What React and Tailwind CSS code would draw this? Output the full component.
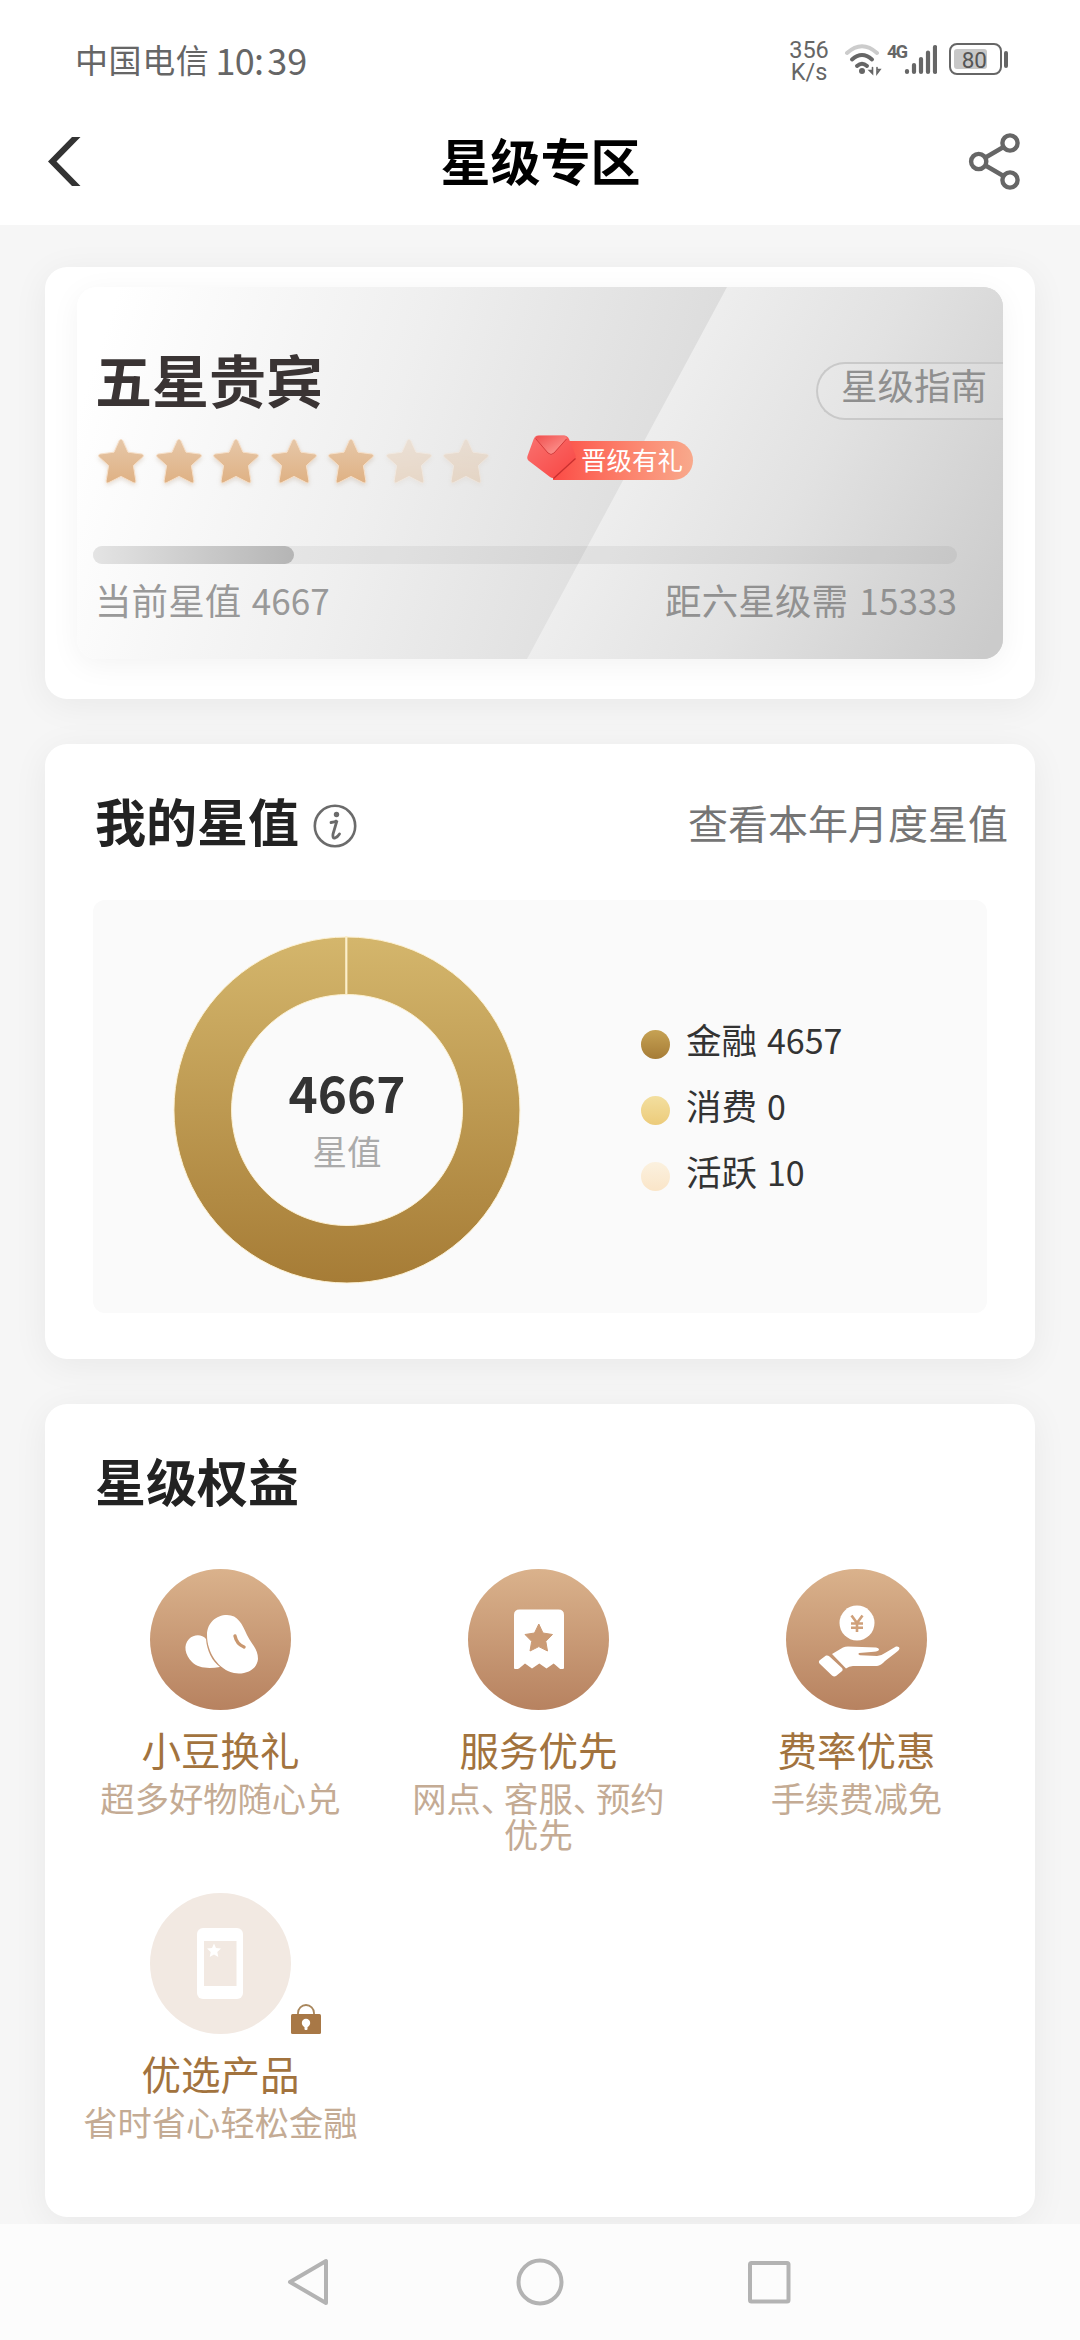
import React from "react";

const STAR =
  "M23 2.5 C24 2.5 24.6 3.2 25 4 L30 15.2 L43.6 17 C45.6 17.3 46 18.8 44.6 20.2 L35.4 28.6 L37.8 43.6 C38 45.6 37 46.4 35.2 45.6 L23 39.4 L10.8 45.6 C9 46.4 8 45.6 8.2 43.6 L10.6 28.6 L1.4 20.2 C0 18.8 0.4 17.3 2.4 17 L16 15.2 L21 4 C21.4 3.2 22 2.5 23 2.5 Z";

function StatusBar() {
  return (
    <div className="flex h-[100px] items-start pl-[75px] pr-[72px] text-[#666666]">
      <div className="mt-[41px] flex items-center whitespace-nowrap leading-[36px]">
        <span className="text-[33px] tracking-[0.6px]">中国电信</span>
        <span className="ml-[6px] text-[36px] tracking-[-0.7px]">10:</span>
        <span className="ml-[4px] text-[36px]">39</span>
      </div>
      <div className="ml-auto mt-[38px] flex items-start">
        <div className="mr-[5px] mt-px w-[42px] text-center font-[Roboto,sans-serif] text-[23.500px] leading-[22px]">
          <div>356</div>
          <div>K/s</div>
        </div>
        <svg className="ml-[9px] mt-[5px] h-[33px] w-[40px]" viewBox="0 0 40 33" fill="none" strokeLinecap="round">
          <path d="M3 10 Q18 -3.500 33 10" stroke="#cccccc" strokeWidth="4" />
          <path d="M8 16.500 Q18 7.500 28 16.500" stroke="#666666" strokeWidth="4" />
          <path d="M13 23 Q18 18.500 23 23" stroke="#666666" strokeWidth="4" />
          <circle cx="18" cy="28" r="3" fill="#666666" />
          <path d="M28.500 24.500 V30.500 L25.500 27.500 H28.500 M33 24.500 V30.500 L36 26.500 H33" stroke="#666666" strokeWidth="1.600" />
        </svg>
        <span className="ml-[3px] mt-[3px] w-[19px] font-[Roboto,sans-serif] text-[18px] font-bold leading-[22px] tracking-[-1.5px]">
          4G
        </span>
        <svg className="-ml-[3px] mt-[5px] h-[33px] w-[34px]" viewBox="0 0 34 33" stroke="#666666" strokeWidth="4.200" strokeLinecap="round">
          <path d="M4 28 V29 M11 22 V29 M18 16 V29 M25 9.500 V29 M32 4 V29" />
        </svg>
        <div className="ml-[12px] mt-[5px] flex items-center">
          <div className="flex h-[32px] w-[53px] items-center rounded-[8px] border-[2.500px] border-[#666666] pl-[3px]">
            <div className="flex h-[20px] w-[33px] items-center justify-end whitespace-nowrap rounded-[3px] bg-[#c8c8c8] pt-[2px] font-[Roboto,sans-serif] text-[22.500px] leading-[20px] text-[#555555]">
              80
            </div>
          </div>
          <div className="ml-[2px] h-[17px] w-[4px] rounded-full bg-[#666666]" />
        </div>
      </div>
    </div>
  );
}

function Header() {
  return (
    <div className="grid h-[125px] grid-cols-3 items-start bg-white pl-[46px] pr-[57px] pt-[33px]">
      <svg className="mt-[2px] h-[54px] w-[36px]" viewBox="0 0 36 54">
        <path d="M26 2 H34.500 L10.500 26.500 L34.500 51 H26 L2 26.500 Z" fill="#333333" />
      </svg>
      <h1 className="-mr-[12px] -mt-[2px] whitespace-nowrap text-center text-[50px] font-bold leading-[56px] text-black">星级专区</h1>
      <svg className="ml-auto h-[60px] w-[56px]" viewBox="0 0 56 60" fill="none" stroke="#666666" strokeWidth="4.400">
        <circle cx="43" cy="10" r="7.600" />
        <circle cx="11.700" cy="28.500" r="7.600" />
        <circle cx="43" cy="47" r="7.600" />
        <path d="M18.500 24.500 L36.500 14 M18.500 32.500 L36.500 43" />
      </svg>
    </div>
  );
}

function Star({ on }) {
  return (
    <svg className={on ? "h-[49px] w-[46px] overflow-visible" : "h-[49px] w-[46px] overflow-visible opacity-35"} viewBox="0 0 46 49">
      <defs>
        <linearGradient id="starFill" x1="0" y1="0" x2="0" y2="1">
          <stop offset="0" stopColor="#e6c7a8" />
          <stop offset="1" stopColor="#dfb184" />
        </linearGradient>
      </defs>
      <path d={STAR} fill="url(#starFill)" stroke="#f6dfc8" strokeWidth="1" className="drop-shadow-[0_2px_2px_rgba(150,110,70,0.2)]" />
    </svg>
  );
}

function GiftBadge() {
  return (
    <div className="ml-[37px] flex h-[46px] items-start">
      <svg className="z-10 h-[46px] w-[52px]" viewBox="0 0 52 46">
        <defs>
          <linearGradient id="envelope" x1="0" y1="0" x2="1" y2="1">
            <stop offset="0" stopColor="#f97270" />
            <stop offset="1" stopColor="#f94542" />
          </linearGradient>
          <linearGradient id="flap" x1="0" y1="0" x2="1" y2="1">
            <stop offset="0" stopColor="#f04f4e" />
            <stop offset="1" stopColor="#ffa09a" />
          </linearGradient>
        </defs>
        <path d="M12 0.500 H38 Q41.500 0.500 43 4 L49.500 20 Q50.500 23 48 25 L29.500 42 Q27 44 24 42 L3 26 Q0.500 24 1.500 21 L7.500 4.500 Q9 0.500 12 0.500 Z" fill="url(#envelope)" />
        <path d="M49.500 23.500 L27.500 43.500" stroke="#c8302f" strokeWidth="1.300" fill="none" />
        <path d="M9.500 3 Q10 0.800 13 0.800 H38 Q41 1 40.500 3.500 L28 18 Q25 21 22 18 Z" fill="url(#flap)" />
        <path d="M9.500 3.500 L22 18 Q25 21 28 18 L40.500 4" fill="none" stroke="#d43c3c" strokeWidth="1" />
      </svg>
      <div className="-ml-[25px] mt-[6px] flex h-[39px] w-[140px] items-center whitespace-nowrap rounded-r-full bg-gradient-to-r from-[#fb4a46] to-[#f8a98c] pb-[3px] pl-[28px] text-[25.500px] leading-[36px] text-white">
        晋级有礼
      </div>
    </div>
  );
}

function LevelCard() {
  return (
    <section className="mx-[45px] h-[432px] rounded-[22px] bg-white pl-[32px] pr-[32px] pt-[20px] shadow-[0_6px_36px_rgba(0,0,0,0.06)]">
      <div className="relative h-[372px] overflow-hidden rounded-[20px] bg-[linear-gradient(108deg,#ffffff_4%,#efefef_34%,#d9d9d9_68%)] shadow-[0_6px_30px_rgba(0,0,0,0.05)]">
        <div className="absolute inset-0 bg-[linear-gradient(118deg,#f6f6f6_46%,#e2e2e2_74%,#cbcbcb_98%)] [clip-path:polygon(650px_0,100%_0,100%_100%,450px_100%)]" />
        <div className="relative pl-[16px]">
          <div className="flex items-start justify-between pt-[56px]">
            <h2 className="pl-[2px] text-[57px] font-bold leading-[70px] text-[#3a3434]">五星贵宾</h2>
            <div className="mt-[19px] h-[58px] w-[187px] rounded-l-full border-2 border-r-0 border-[#c9c9c9] bg-white/10 pl-[23px] text-[36.500px] leading-[41px] text-[#8f8f8f]">
              星级指南
            </div>
          </div>
          <div className="mt-[15px] flex items-start pl-[5px]">
            <div className="flex gap-[11.500px] pt-[2px]">
              {[1, 2, 3, 4, 5, 6, 7].map((n) => (
                <Star key={n} on={n <= 5} />
              ))}
            </div>
            <GiftBadge />
          </div>
          <div className="mt-[60px] h-[18px] w-[864px] rounded-full bg-black/[0.05]">
            <div className="h-full w-[201px] rounded-full bg-gradient-to-r from-[#e4e4e4] to-[#b5b5b5]" />
          </div>
          <div className="mt-[14px] flex w-[864px] justify-between pl-[2px] text-[36.500px] leading-[44px] tracking-[0.1px] text-[#999999]">
            <span>
              当前星值 <span className="ml-[2px] text-[35px]">4667</span>
            </span>
            <span className="text-[#919191]">
              距六星级需 <span className="ml-[3px] text-[35px]">15333</span>
            </span>
          </div>
        </div>
      </div>
    </section>
  );
}

function Donut() {
  return (
    <div className="relative mt-[6px] h-[348px] w-[348px]">
      <svg className="h-[348px] w-[348px]" viewBox="0 0 348 348">
        <defs>
          <linearGradient id="gold" x1="0" y1="0" x2="0" y2="1">
            <stop offset="0" stopColor="#d4b66c" />
            <stop offset="1" stopColor="#a67c36" />
          </linearGradient>
        </defs>
        <path
          fillRule="evenodd"
          fill="url(#gold)"
          stroke="#fdf1d2"
          strokeWidth="1"
          d="M174 1 A173 173 0 1 1 173.900 1 Z M174 58.500 A115.500 115.500 0 1 0 174.100 58.500 Z"
        />
        <path d="M173.300 0 V58.500" stroke="#fcefcb" strokeWidth="2.200" />
      </svg>
      <div className="absolute inset-0 flex flex-col items-center pt-[126px]">
        <span className="text-[49.500px] font-bold leading-[60px] text-[#333333]">4667</span>
        <span className="mt-[6px] text-[34.500px] leading-[44px] text-[#aaaaaa]">星值</span>
      </div>
    </div>
  );
}

function Legend() {
  const rows = [
    ["金融", "4657", "from-[#c6a254] to-[#a67c36]"],
    ["消费", "0", "from-[#f3df9f] to-[#eccb7a]"],
    ["活跃", "10", "from-[#fbf1df] to-[#fae5c8]"],
  ];
  return (
    <ul className="ml-[120px] mt-[2px]">
      {rows.map(([name, value, tone]) => (
        <li key={name} className="flex h-[66px] items-center">
          <i className={`mt-[6px] h-[29px] w-[29px] rounded-full bg-gradient-to-b ${tone}`} />
          <span className="-mt-[4px] ml-[16px] text-[35.500px] leading-[44px] text-[#333333]">
            {name} <span className="ml-[2px] text-[34px]">{value}</span>
          </span>
        </li>
      ))}
    </ul>
  );
}

function ValueCard() {
  return (
    <section className="mx-[45px] mt-[45px] h-[615px] rounded-[22px] bg-white pt-[44px] shadow-[0_6px_36px_rgba(0,0,0,0.06)]">
      <div className="flex h-[64px] items-center pl-[50px] pr-[27px]">
        <h2 className="text-[51px] font-bold leading-[64px] text-[#222222]">我的星值</h2>
        <svg className="ml-[14px] mt-[11px] h-[44px] w-[44px]" viewBox="0 0 44 44" fill="none" stroke="#6b6b6b" strokeLinecap="round">
          <circle cx="22" cy="22" r="20.200" strokeWidth="2.600" />
          <circle cx="23.500" cy="10.500" r="2.700" fill="#6b6b6b" stroke="none" />
          <path d="M18 18.500 Q22.500 18 24 16.500 L20 30 Q19.300 34.500 22 34 Q24.500 33.200 26.500 30" strokeWidth="2.800" />
        </svg>
        <span className="ml-auto mt-[3px] whitespace-nowrap text-[40px] leading-[56px] text-[#757575]">查看本年月度星值</span>
      </div>
      <div className="ml-[48px] mt-[48px] flex h-[413px] w-[894px] items-center rounded-[12px] bg-[#fafafa] pl-[80px]">
        <Donut />
        <Legend />
      </div>
    </section>
  );
}

function BeanIcon() {
  return (
    <g fill="#ffffff">
      <path d="M56 70 C52 65 44 65 39 70 C33 76 35 86 42 93 C48 99 58 100 70 98 C62 92 57 82 56 70 Z" />
      <path d="M57 66 C57 54 66 46 77 46 C88 46 92 55 97 66 C101 75 108 79 108 90 C107 101 95 106 84 104 C69 101 57 84 57 66 Z" />
      <path d="M85 67 C86 72 89 76 94 78" fill="none" stroke="#c9976f" strokeWidth="3.400" strokeLinecap="round" />
    </g>
  );
}

function TicketIcon() {
  return (
    <g>
      <path d="M51.500 40.500 H90.500 Q96 40.500 96 46 V99.500 Q93 100.500 91.500 99.500 L85.700 94.500 L78.500 99.500 L71.300 94.500 L64 99.500 L57 94.500 L51 99.500 Q48 100.500 46 99.500 V46 Q46 40.500 51.500 40.500 Z" fill="#ffffff" />
      <path d="M70.800 55 L75 64 L84.500 65.500 L77.800 72.300 L79.500 82 L70.800 77.600 L62 82 L63.700 72.300 L57 65.500 L66.500 64 Z" fill="#cb9b75" stroke="#cb9b75" strokeWidth="1" strokeLinejoin="round" />
    </g>
  );
}

function HandIcon() {
  return (
    <g fill="#ffffff">
      <circle cx="71" cy="54" r="17.500" />
      <path d="M65.500 46.500 L71 54 L76.500 46.500 M71 54 V63 M65 54.500 H77 M65 58.800 H77" fill="none" stroke="#cfa07a" strokeWidth="2.600" />
      <path d="M46 85 L57 78.500 Q59 77.500 62 77.500 L90 78.500 Q93 79 93 80.500 Q92.500 82.500 88 82.700 L73 84 Q71.500 85.500 74 86.300 L91 87 Q95 87 99 84 L110 77.500 Q113 77 113.500 79 Q113.500 81 110 83.500 L99 92 Q95 96.500 91 97 H67 Q63 97 60 99.500 Z" />
      <path d="M40 86.500 Q42 86 43.500 87.500 L56 99 Q57.500 101 55.500 102.500 L50 107 Q48 108 46 106.500 L33.500 94.500 Q32 92.500 34 91 Z" />
    </g>
  );
}

function PhoneIcon() {
  return (
    <g>
      <rect x="47" y="35" width="46" height="71" rx="6" fill="#ffffff" />
      <rect x="54" y="48" width="32.500" height="45" fill="#f2e9e2" />
      <path d="M64 50.500 L66 55 L71 55.500 L67.300 59 L68.300 64 L64 61.500 L59.700 64 L60.700 59 L57 55.500 L62 55 Z" fill="#ffffff" />
    </g>
  );
}

function Benefit({ icon, title, locked, children }) {
  return (
    <div className="flex h-[324px] flex-col items-center">
      <div className="relative">
        <svg className="h-[141px] w-[141px]" viewBox="0 0 141 141">
          <defs>
            <linearGradient id="bronze" x1="0" y1="0" x2="0" y2="1">
              <stop offset="0" stopColor="#dab28c" />
              <stop offset="1" stopColor="#b78260" />
            </linearGradient>
          </defs>
          <circle cx="70.500" cy="70.500" r="70.500" fill={locked ? "#f2e9e2" : "url(#bronze)"} />
          {icon}
        </svg>
        {locked && (
          <svg className="absolute -right-[30px] bottom-0 h-[30px] w-[30px]" viewBox="0 0 30 30">
            <path d="M7 11 V9 A8 8 0 0 1 23 9 V11" fill="none" stroke="#a8865c" strokeWidth="1.800" />
            <rect y="10" width="30" height="20" rx="1.500" fill="#a87846" />
            <circle cx="15" cy="19" r="4.200" fill="#ffffff" />
            <rect x="13.500" y="20" width="3" height="6" rx="1" fill="#ffffff" />
          </svg>
        )}
      </div>
      <h3 className="mt-[13px] whitespace-nowrap text-[39.500px] leading-[52px] text-[#a2733e]">{title}</h3>
      <p className="mt-[4px] whitespace-nowrap text-center text-[34.300px] leading-[36px] text-[#c4ab94]">{children}</p>
    </div>
  );
}

function BenefitsCard() {
  return (
    <section className="mx-[45px] mt-[45px] h-[813px] rounded-[22px] bg-white pt-[44px] shadow-[0_6px_36px_rgba(0,0,0,0.06)]">
      <h2 className="pl-[50px] text-[51px] font-bold leading-[64px] text-[#222222]">星级权益</h2>
      <div className="ml-[16.400px] mt-[57px] grid w-[954px] grid-cols-3">
        <Benefit icon={<BeanIcon />} title="小豆换礼">
          超多好物随心兑
        </Benefit>
        <Benefit icon={<TicketIcon />} title="服务优先">
          网点<span className="tracking-[-11px]">、</span>客服<span className="tracking-[-11px]">、</span>预约
          <br />
          优先
        </Benefit>
        <Benefit icon={<HandIcon />} title="费率优惠">
          手续费减免
        </Benefit>
        <Benefit icon={<PhoneIcon />} title="优选产品" locked>
          省时省心轻松金融
        </Benefit>
      </div>
    </section>
  );
}

function NavBar() {
  return (
    <nav className="flex h-[116px] shrink-0 items-start justify-center gap-[179px] bg-[#fcfcfc] pt-[32px]">
      <svg className="h-[52px] w-[52px]" viewBox="0 0 52 52" fill="none" stroke="#b3b3b3" strokeWidth="4" strokeLinejoin="round">
        <path d="M43 5 V47 L7 26 Z" />
      </svg>
      <svg className="h-[52px] w-[52px]" viewBox="0 0 52 52" fill="none" stroke="#b3b3b3" strokeWidth="4">
        <circle cx="26" cy="26" r="21.500" />
      </svg>
      <svg className="h-[52px] w-[52px]" viewBox="0 0 52 52" fill="none" stroke="#b3b3b3" strokeWidth="4">
        <rect x="5" y="7" width="38.500" height="38.500" rx="1.500" />
      </svg>
    </nav>
  );
}

export default function App() {
  return (
    <div className="flex h-[2340px] w-[1080px] flex-col overflow-hidden bg-[#f6f6f6] font-['Noto_Sans_CJK_SC',sans-serif]">
      <div className="h-[225px] shrink-0 bg-white">
        <StatusBar />
        <Header />
      </div>
      <main className="h-[1999px] shrink-0 overflow-hidden pt-[42px]">
        <LevelCard />
        <ValueCard />
        <BenefitsCard />
      </main>
      <NavBar />
    </div>
  );
}
